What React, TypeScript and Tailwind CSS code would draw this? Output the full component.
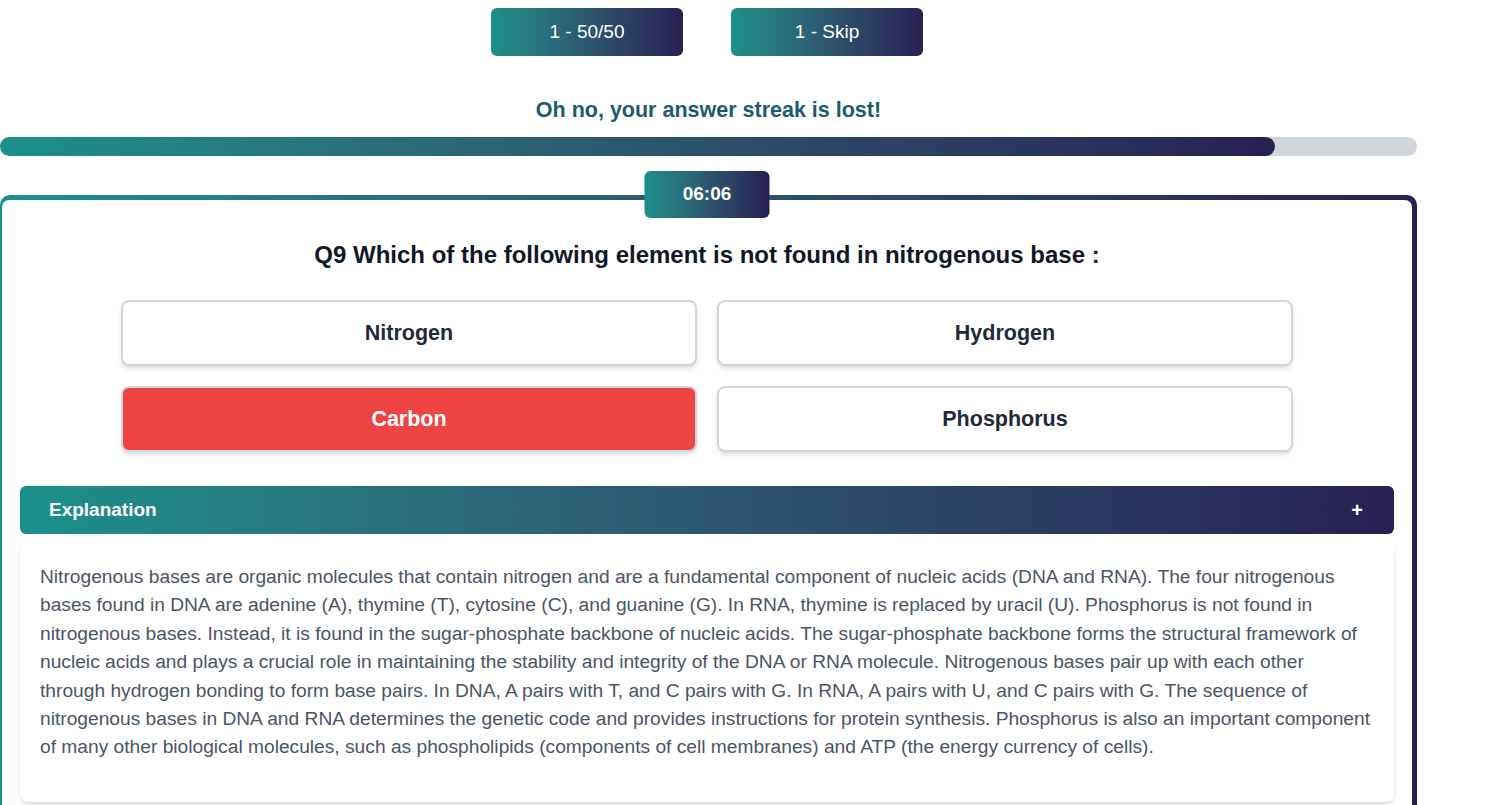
import { useState } from 'react';

const options = ['Nitrogen', 'Hydrogen', 'Carbon', 'Phosphorus'];

const explanation =
  'Nitrogenous bases are organic molecules that contain nitrogen and are a fundamental component of nucleic acids (DNA and RNA). The four nitrogenous bases found in DNA are adenine (A), thymine (T), cytosine (C), and guanine (G). In RNA, thymine is replaced by uracil (U). Phosphorus is not found in nitrogenous bases. Instead, it is found in the sugar-phosphate backbone of nucleic acids. The sugar-phosphate backbone forms the structural framework of nucleic acids and plays a crucial role in maintaining the stability and integrity of the DNA or RNA molecule. Nitrogenous bases pair up with each other through hydrogen bonding to form base pairs. In DNA, A pairs with T, and C pairs with G. In RNA, A pairs with U, and C pairs with G. The sequence of nitrogenous bases in DNA and RNA determines the genetic code and provides instructions for protein synthesis. Phosphorus is also an important component of many other biological molecules, such as phospholipids (components of cell membranes) and ATP (the energy currency of cells).';

function LifelineButton({ label }: { label: string }) {
  return (
    <button className="h-12 w-48 rounded-md bg-gradient-to-r from-[#1a908a] to-[#272052] text-[19px] text-white">
      {label}
    </button>
  );
}

export default function App() {
  const [open, setOpen] = useState(true);
  const wrong = 'Carbon';

  return (
    <div className="min-h-screen w-[1417px] bg-white font-['Liberation_Sans',Arial,sans-serif]">
      <div className="flex justify-center gap-12 pt-2 pr-[3px]">
        <LifelineButton label="1 - 50/50" />
        <LifelineButton label="1 - Skip" />
      </div>

      <p className="mt-10 text-center text-[21.5px] font-bold leading-7 text-[#1d5a6c]">
        Oh no, your answer streak is lost!
      </p>

      <div className="mt-[13px] h-[19px] w-full rounded-full bg-gray-300">
        <div className="h-full w-[90%] rounded-full bg-gradient-to-r from-[#1a908a] to-[#272052]" />
      </div>

      <div className="mt-[39px] rounded-[10px] bg-gradient-to-r from-[#1a908a] to-[#272052] pt-[5px] pr-[5px] pl-[2px]">
        <div className="relative min-h-[620px] rounded-t-[7px] bg-white px-[18px] pt-[39px]">
          <div className="absolute top-[-29px] left-1/2 flex h-[47px] w-[125px] -translate-x-1/2 items-center justify-center rounded-md bg-gradient-to-r from-[#1a908a] to-[#272052] text-[19px] font-bold text-white">
            06:06
          </div>

          <h2 className="text-center text-2xl leading-8 font-bold text-gray-900">
            Q9 Which of the following element is not found in nitrogenous base :
          </h2>

          <div className="mx-auto mt-[29px] grid w-[1172px] grid-cols-2 gap-x-5 gap-y-5">
            {options.map((opt) => (
              <button
                key={opt}
                className={
                  opt === wrong
                    ? 'h-[66px] rounded-lg border-2 border-gray-300 bg-[#ef4444] text-[21.5px] font-bold text-white shadow-md'
                    : 'h-[66px] rounded-lg border-2 border-gray-300 bg-white text-[21.5px] font-bold text-gray-800 shadow-md'
                }
              >
                {opt}
              </button>
            ))}
          </div>

          <button
            onClick={() => setOpen(!open)}
            className="mt-[34px] flex h-12 w-full items-center justify-between rounded-md bg-gradient-to-r from-[#1a908a] to-[#272052] pr-[31px] pl-[29px] text-white"
          >
            <span className="text-[19px] font-bold">Explanation</span>
            <span className="text-[20px] font-bold">+</span>
          </button>

          {open && (
            <div className="mt-[7px] rounded-lg bg-white pt-[22px] pr-[21px] pb-10 pl-5 shadow-md">
              <p className="text-[19.2px] leading-[28.4px] text-gray-600">{explanation}</p>
            </div>
          )}
        </div>
      </div>
    </div>
  );
}
